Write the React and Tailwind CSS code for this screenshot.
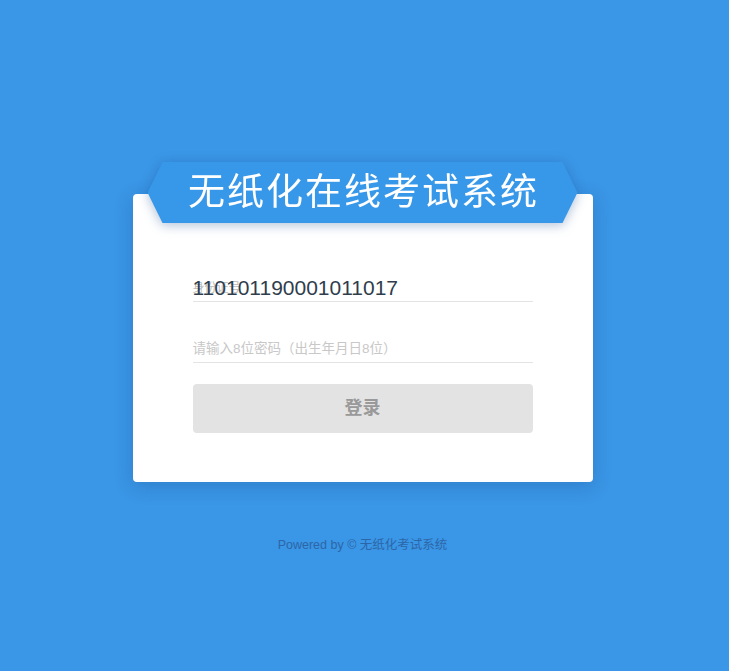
export default function App() {
  return (
    <div className="min-h-screen w-full bg-[#3a96e6] flex flex-col items-center pt-[162px] pr-[4px] font-['Liberation_Sans','Noto_Sans_CJK_SC',sans-serif]">
      {/* ribbon title */}
      <div className="relative z-10 [filter:drop-shadow(0_2px_6px_rgba(20,70,140,0.35))]">
        <div className="w-[430px] h-[61px] bg-[#3797e8] flex items-center justify-center [clip-path:polygon(15px_0,calc(100%-15px)_0,100%_50%,calc(100%-15px)_100%,15px_100%,0_50%)]">
          <h1 className="text-white text-[37px] leading-none tracking-[2px] font-normal pl-[2px]">无纸化在线考试系统</h1>
        </div>
      </div>

      <div className="mt-[-29px] w-[460px] h-[288px] bg-white rounded-[4px] shadow-[0_4px_18px_rgba(20,60,120,0.25)] px-[60px] pt-[72px]">
        <div className="relative h-[36px] border-b border-[#e4e4e4] flex items-end pb-[3px]">
          <span className="absolute left-0 top-[13px] text-[12px] text-[#bbb]">身份证号</span>
          <span className="relative text-[21px] leading-none text-[#2f3d4c]">110101190001011017</span>
        </div>
        <div className="mt-[25px] h-[36px] border-b border-[#e4e4e4] flex items-end pb-[7px]">
          <span className="text-[13.5px] leading-none text-[#c8c8c8]">请输入8位密码（出生年月日8位）</span>
        </div>
        <button className="mt-[21px] w-full h-[49px] rounded-[4px] bg-[#e3e3e3] text-[#999] text-[18px] font-bold flex items-center justify-center">
          登录
        </button>
      </div>

      <p className="mt-[54px] text-[12.5px] text-[#2c66a8]">Powered by © 无纸化考试系统</p>
    </div>
  );
}
